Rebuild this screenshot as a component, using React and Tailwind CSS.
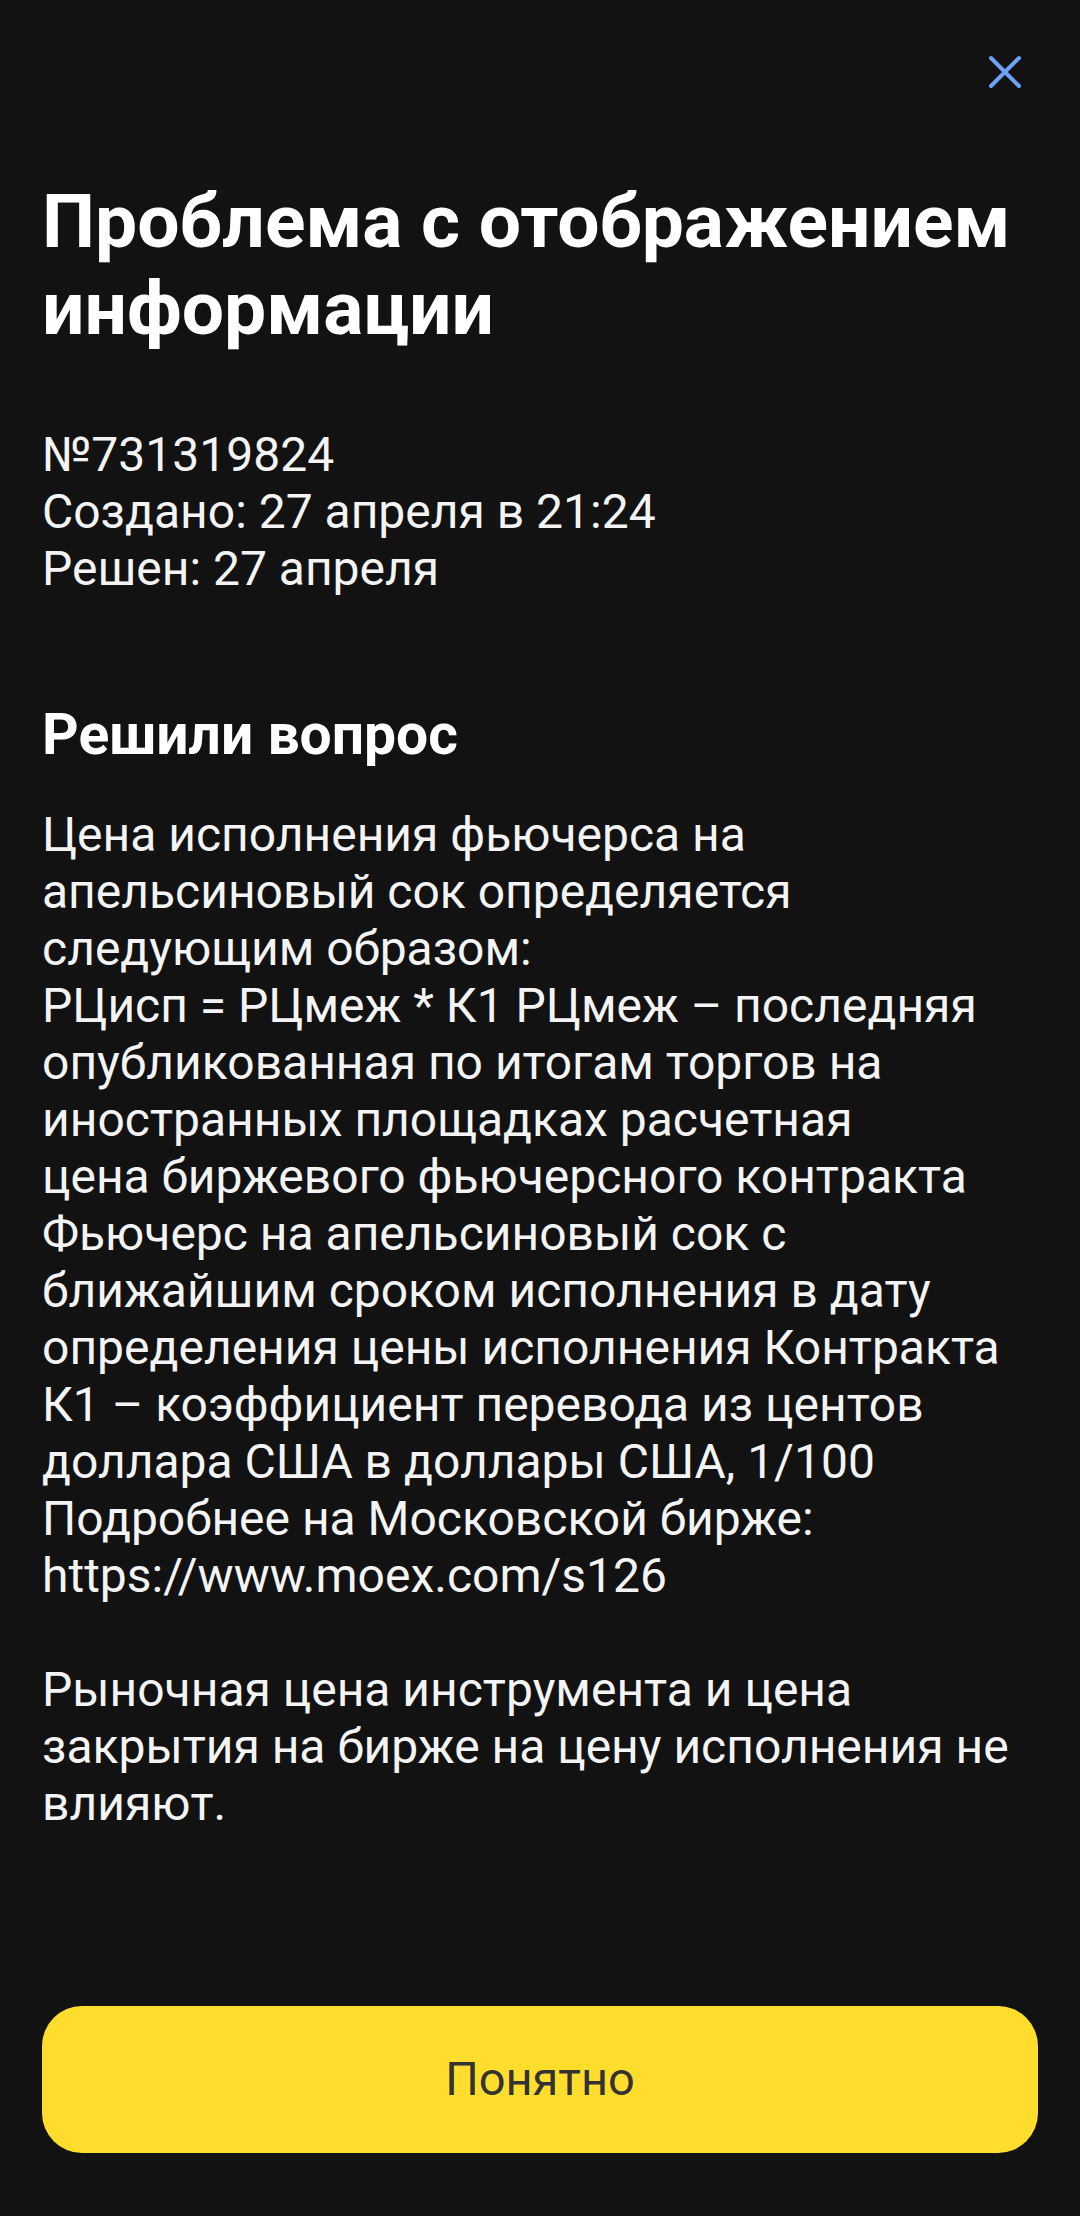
import React from "react";

const bodyLines = [
  "Цена исполнения фьючерса на",
  "апельсиновый сок определяется",
  "следующим образом:",
  "РЦисп = РЦмеж * К1 РЦмеж – последняя",
  "опубликованная по итогам торгов на",
  "иностранных площадках расчетная",
  "цена биржевого фьючерсного контракта",
  "Фьючерс на апельсиновый сок с",
  "ближайшим сроком исполнения в дату",
  "определения цены исполнения Контракта",
  "К1 – коэффициент перевода из центов",
  "доллара США в доллары США, 1/100",
  "Подробнее на Московской бирже:",
  "https://www.moex.com/s126",
];

const footLines = [
  "Рыночная цена инструмента и цена",
  "закрытия на бирже на цену исполнения не",
  "влияют.",
];

function CloseIcon() {
  return (
    <svg width="34" height="34" viewBox="0 0 34 34" fill="none">
      <path
        d="M3 3L31 31M31 3L3 31"
        stroke="#6fa2f4"
        strokeWidth="4"
        strokeLinecap="round"
      />
    </svg>
  );
}

export default function App() {
  return (
    <div
      className="min-h-[2216px] bg-[#121212] text-[#f4f4f4] flex flex-col px-[42px]"
      style={{ fontFamily: "Roboto, 'Noto Sans', sans-serif" }}
    >
      <div className="flex justify-end pt-[55px] pr-[16px]">
        <button className="block">
          <CloseIcon />
        </button>
      </div>

      <h1 className="mt-[89px] text-[75px] leading-[87px] font-bold text-white whitespace-nowrap">
        Проблема с отображением
        <br />
        информации
      </h1>

      <div className="mt-[74px] text-[48px] leading-[57px]">
        <p>№731319824</p>
        <p>Создано: 27 апреля в 21:24</p>
        <p>Решен: 27 апреля</p>
      </div>

      <h2 className="mt-[106px] text-[57px] leading-[63px] font-bold text-white">
        Решили вопрос
      </h2>

      <div className="mt-[40px] text-[48px] leading-[57px] whitespace-nowrap">
        <p>
          {bodyLines.map((l, i) => (
            <React.Fragment key={i}>
              {l}
              <br />
            </React.Fragment>
          ))}
        </p>
        <p className="mt-[57px]">
          {footLines.map((l, i) => (
            <React.Fragment key={i}>
              {l}
              <br />
            </React.Fragment>
          ))}
        </p>
      </div>

      <div className="mt-auto pb-[63px]">
        <button className="w-full h-[147px] rounded-[40px] bg-[#ffdd2d] text-[#333333] text-[47px] flex items-center justify-center">
          Понятно
        </button>
      </div>
    </div>
  );
}
